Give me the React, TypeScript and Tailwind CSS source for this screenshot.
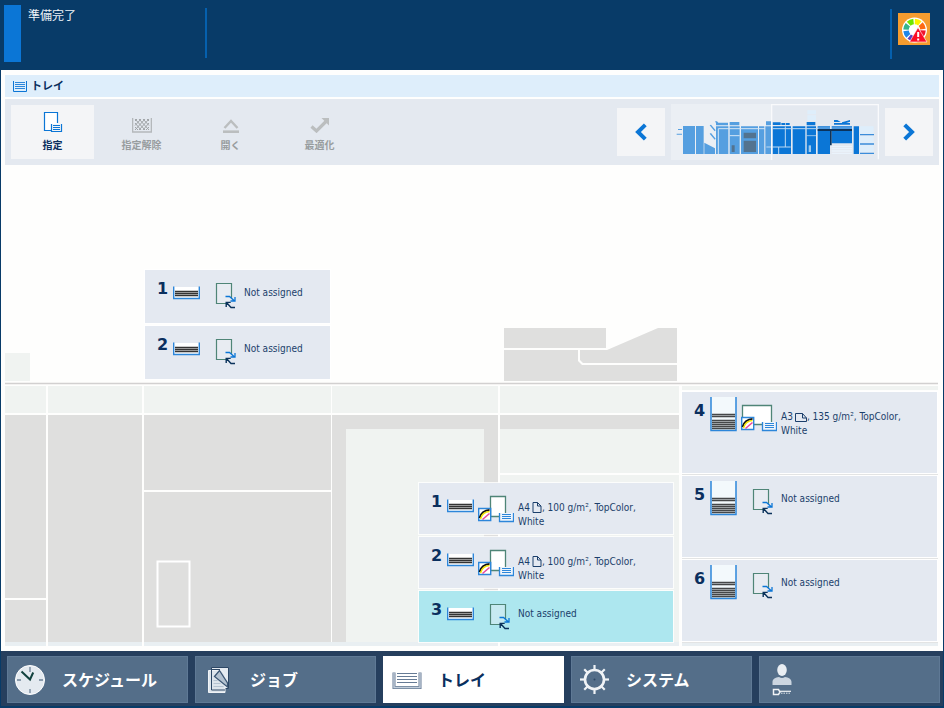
import type { ReactNode } from "react";

type Media = "portrait" | "landscape" | null;

type Tray = {
  id: number;
  media: Media;
  size?: string;
  details?: string;
  color?: string;
  selected?: boolean;
};

const inserterTrays: Tray[] = [
  { id: 1, media: null },
  { id: 2, media: null },
];

const engineTrays: Tray[] = [
  { id: 1, media: "portrait", size: "A4", details: "100 g/m², TopColor,", color: "White" },
  { id: 2, media: "portrait", size: "A4", details: "100 g/m², TopColor,", color: "White" },
  { id: 3, media: null, selected: true },
];

const moduleTrays: Tray[] = [
  { id: 4, media: "landscape", size: "A3", details: "135 g/m², TopColor,", color: "White" },
  { id: 5, media: null },
  { id: 6, media: null },
];

const wheelColors = [
  "#fff200",
  "#ff6a13",
  "#f0142d",
  "#e6007e",
  "#5b3fc0",
  "#1f86e8",
  "#35b58c",
  "#6fe600",
];

function ColorWarningIcon() {
  return (
    <svg viewBox="0 0 32 32" className="size-8" aria-hidden="true">
      <rect width="32" height="32" fill="#f59c2f" />
      <circle cx="16.5" cy="17" r="12.5" fill="#fff" />
      {wheelColors.map((color, i) => (
        <circle
          key={color}
          cx="16.5"
          cy="17"
          r="8.5"
          fill="none"
          stroke={color}
          strokeWidth="5.5"
          pathLength="8"
          strokeDasharray="0.82 7.18"
          transform={`rotate(${i * 45 - 88} 16.5 17)`}
        />
      ))}
      <path d="M20 14.5 29 29H11.5Z" fill="#fb0d27" stroke="#fff" strokeWidth="0.6" />
      <path d="M20.2 19v5M20.2 25.4v2" stroke="#fff" strokeWidth="2" />
    </svg>
  );
}

function TitleTrayIcon() {
  return (
    <svg viewBox="0 0 14 11" className="h-[11px] w-[14px]" fill="none" aria-hidden="true">
      <path d="M.5 0v10.5h13V0" stroke="#0b76d6" />
      <path d="M2 1.5h10M2 3.5h10M2 5.5h10M2 7.5h10" stroke="#2c86da" strokeWidth="1.2" />
    </svg>
  );
}

function AssignIcon() {
  return (
    <svg viewBox="0 0 20 22" className="h-[22px] w-5" fill="none" aria-hidden="true">
      <path d="M8 19.5H1.5v-18h13V12" fill="#fff" stroke="#0b76d6" strokeWidth="1.2" />
      <path d="M8.5 13v7.5h10V13" fill="#f4f5f7" stroke="#0b76d6" strokeWidth="1.2" />
      <path d="M10 14.5h7M10 16.5h7M10 18.5h7" stroke="#0b76d6" />
    </svg>
  );
}

function UnassignIcon() {
  return (
    <svg viewBox="0 0 20 15" className="h-[15px] w-5" fill="none" aria-hidden="true">
      <path d="M.5 0v14h19V0" stroke="#b4b8bb" strokeWidth="1.6" />
      <path
        d="m3 1 10 11M7 1l10 11M11 1l6 6.500M15 1l2 2M3 5l6 7M3 9l3 3M17 1 7 12M13 1 3 12M9 1 3 7.500M5 1 3 3M17 5l-6 7M17 9l-3 3"
        stroke="#9fa3a6"
      />
    </svg>
  );
}

function OpenIcon() {
  return (
    <svg viewBox="0 0 16 14" className="h-[14px] w-4" fill="none" aria-hidden="true">
      <path d="m1.5 9 6.5-7 6.5 7" stroke="#bbbebf" strokeWidth="2.4" />
      <path d="M0 12.7h16" stroke="#bbbebf" strokeWidth="2.6" />
    </svg>
  );
}

function OptimizeIcon() {
  return (
    <svg viewBox="0 0 20 15" className="h-[15px] w-5" fill="none" aria-hidden="true">
      <path d="m1.5 8.5 5 4.5L16 3.5" stroke="#bbbebf" strokeWidth="3.2" />
      <path d="M11.5 0H19v7.5Z" fill="#bbbebf" />
    </svg>
  );
}

function ChevronIcon({ direction }: { direction: "left" | "right" }) {
  return (
    <svg viewBox="0 0 12 18" className="h-[18px] w-3" fill="none" aria-hidden="true">
      <path
        d={direction === "left" ? "M10.3 1.8 3 9l7.3 7.2" : "M1.7 1.8 9 9l-7.3 7.2"}
        stroke="#0b76d6"
        strokeWidth="4"
      />
    </svg>
  );
}

function MachineOverview() {
  return (
    <svg viewBox="33 12 624 168" className="h-14 w-[208px]" aria-hidden="true">
      <rect x="33" y="12" width="301" height="168" fill="#ebeff4" />
      <g fill="#559fe0">
        <path d="M54 87h12v3H54zM50 101h16v3H50zM69 78h36v84H69zM108 78h23v84h-23zM133 128l32 17v17h-32z" />
        <path d="m149 76 4-2 14 17-3 3zM149 101l4-2 14 17-3 3zM165 64h6l4 4h29v8h-36v-7z" />
        <path d="M168 79h37v83h-37zM209 66h29v10h-29zM209 79h30v83h-30zM243 79h51v83h-51zM297 79h16v83h-16zM318 64h17v12h-17zM316 79h19v83h-19z" />
      </g>
      <path d="M175 162V86h140M209 107h30" fill="none" stroke="#d5e6f6" strokeWidth="3" />
      <path d="M251 98h37v17h-37zM251 122h37v34h-37zM215 136h9v20h-9z" fill="#53738f" />
      <g fill="#0b76d6">
        <path d="M338 79h55v83h-55zM398 79h38v83h-38zM440 79h28v83h-28zM473 79h37v83h-37zM515 79h61v51h-61zM581 79h16v83h-16z" />
        <path d="M338 67h24v8h-24zM364 69h11v6h-11zM377 69h12v6h-12zM440 66h26v10h-26zM522 60h10l10 6h-20zM522 69h32v5h-32zM546 67l24-7v5l-12 4h12v5h-24z" />
      </g>
      <path d="M319 141h73M356 141v21M376 79v62M338 86h137" fill="none" stroke="#bcd9f3" strokeWidth="3" />
      <path d="M440 107h28M473 84h103M597 82h44" fill="none" stroke="#d5e6f6" strokeWidth="2" />
      <path d="M473 87h103v6h-61v43h-5V93h-37z" fill="#0b335c" />
      <path d="M446 136h7v20h-7z" fill="#9cc9ef" />
      <path d="M442 31h26v12h-26zM442 46h26v16h-26zM600 79h41v22h-41zM600 108h41v20h-41zM600 136h41v20h-41z" fill="#deeefb" />
      <path d="M515 138h61v3h-61zM515 144h61v4h-61zM515 151h61v4h-61zM515 158h61v4h-61z" fill="#eaf3fc" />
      <path d="M600 104h42M600 132h42M600 160h42" stroke="#3a8ddb" strokeWidth="4" />
      <path d="M335 180V14h320v164" fill="none" stroke="#f9fafc" strokeWidth="4" />
    </svg>
  );
}

// Front view of the print engine and its modules, behind the tray cards.
function MachineDrawing() {
  return (
    <svg
      viewBox="5 165 934 481"
      className="absolute top-0 left-0 h-[481px] w-[934px]"
      aria-hidden="true"
    >
      <path d="M5 383.5h933" stroke="#d2d0d0" strokeWidth="1.4" />
      <g fill="#f0f3f1">
        <path d="M5 353h25v28H5z" />
        <path d="M5 386h41v27H5zM48 386h94v27H48zM144 386h187v27H144zM332 386h166v27H332zM500 386h179v27H500zM682 386h256v4H682z" />
        <path d="M500 429h179v44H500zM500 475h179v167H500z" />
      </g>
      <g fill="#dfdfde">
        <path d="M5 415h41v183H5zM5 600h41v42H5zM48 415h94v227H48z" />
        <path d="M144 415h187v75H144zM144 492h187v150H144zM332 415h166v227H332zM500 415h179v14H500z" />
        <path d="M504 328h102v20H504zM504 350h74v11l4 4h95v16H504z" />
        <path d="M580 350h27l51-22h19v35h-94l-3-3z" />
      </g>
      <path d="M346 429h138v213H346z" fill="#f0f3f1" />
      <path d="M157.5 561.5h32v65h-32z" fill="none" stroke="#fff" strokeWidth="2" />
      <path d="M682 474.5h256M682 558.5h256M682 642.5h256" stroke="#e3e4e4" />
      <path d="M5 642h41v4H5zM48 642h94v4H48zM144 642h354v4H144zM500 642h179v4H500zM682 643h256v3H682z" fill="#e9eff2" />
    </svg>
  );
}

function FillLevelIcon({ tall }: { tall?: boolean }) {
  if (tall) {
    return (
      <svg viewBox="0 0 27 44" className="h-11 w-[27px]" fill="none" aria-hidden="true">
        <path d="M1 5h25v34H1z" fill="#f3f9fc" />
        <path d="M1 5v33.5h25V5" stroke="#2c86da" strokeWidth="1.5" />
        <path
          d="M2 22.500h23M2 24.500h23M2 28.500h23M2 30.500h23M2 32.500h23M2 34.500h23M2 36.500h23"
          stroke="#454749"
          strokeWidth="1.3"
        />
      </svg>
    );
  }
  return (
    <svg viewBox="0 0 27 44" className="h-11 w-[27px]" fill="none" aria-hidden="true">
      <path d="M1 17h25v12H1z" fill="#fff" />
      <path d="M.7 16.5v12h25.6v-12" stroke="#2c86da" strokeWidth="1.4" />
      <path d="M2 21.5h23M2 23.5h23M2 25.5h23" stroke="#333" strokeWidth="1.4" />
    </svg>
  );
}

function NoMediaIcon() {
  return (
    <svg viewBox="0 0 36 44" className="h-11 w-9" fill="none" aria-hidden="true">
      <path d="M23 33.5H12.500v-20h15V28" fill="#edf1f5" fillOpacity="0.4" stroke="#4f8577" strokeWidth="1.2" />
      <path d="M21.500 26.500h4l4.500 4M31 27v4h-4.500" stroke="#0b76d6" strokeWidth="1.3" />
      <path d="M31 37.500h-4l-4.500-5M22.200 37v-4.600h4.500" stroke="#0b335c" strokeWidth="1.4" />
    </svg>
  );
}

function MediaIcon({ landscape }: { landscape?: boolean }) {
  return (
    <svg viewBox="0 0 36 44" className="h-11 w-9" fill="none" aria-hidden="true">
      <path
        d={landscape ? "M1.500 13.500h29v19h-29z" : "M12.500 13.500h15v20h-15z"}
        fill="#fff"
        stroke="#4f8577"
        strokeWidth="1.3"
      />
      <path d="M.7 25.500h12v12H.7z" fill="#fff" stroke="#2c86da" strokeWidth="1.4" />
      <path d="M1.500 35C2.500 30.500 6.500 27 11.500 27" stroke="#111" strokeWidth="1.8" />
      <path d="M2.500 36C3.500 32 7 28.800 11.500 28.500" stroke="#f5e400" strokeWidth="1.5" />
      <path d="M4.500 36.500 11.500 30.500" stroke="#e8459a" strokeWidth="1.5" />
      <path d="M21.500 30v8.500h14V30" fill="#eef4fb" stroke="#2c86da" strokeWidth="1.3" />
      <path d="M24 31.500h9M24 33.500h9M24 35.500h9" stroke="#2c86da" strokeWidth="1.1" />
    </svg>
  );
}

function FeedEdgeIcon({ landscape }: { landscape?: boolean }) {
  return landscape ? (
    <svg viewBox="0 0 12 9" className="ml-0.5 h-[9px] w-3" fill="none" aria-hidden="true">
      <path d="M.5.5v8h11V5L7.500.5zM7.500.5V5h4" stroke="#1b3f6b" />
    </svg>
  ) : (
    <svg viewBox="0 0 10 11" className="mb-0.5 ml-0.5 h-[11px] w-[10px]" fill="none" aria-hidden="true">
      <path d="M1 .5v10h8V4L5.500.5zM5.500.5V4H9" stroke="#1b3f6b" />
    </svg>
  );
}

function TrayCard({ tray, tall }: { tray: Tray; tall?: boolean }) {
  const landscape = tray.media === "landscape";
  return (
    <button
      type="button"
      aria-pressed={!!tray.selected}
      className={`flex w-full items-start pl-3 text-left font-['DejaVu_Sans_Condensed','DejaVu_Sans',sans-serif] text-[10px] leading-[14px] outline outline-white/80 ${
        tray.selected ? "bg-[#ade7ef]" : "bg-[#e4e9f1]"
      } ${tall ? "h-[81px]" : "h-full"}`}
    >
      <span className="w-4 pt-[11px] font-['DejaVu_Sans',sans-serif] text-base leading-4 font-bold text-[#0a2f5e]">
        {tray.id}
      </span>
      <FillLevelIcon tall={tall} />
      <span className="mx-1 shrink-0">
        {tray.media ? <MediaIcon landscape={landscape} /> : <NoMediaIcon />}
      </span>
      {tray.media ? (
        <span className="flex flex-col pt-[18px]">
          <span className="flex items-center whitespace-nowrap">
            <span>{tray.size}</span>
            <FeedEdgeIcon landscape={landscape} />
            <span>, {tray.details}</span>
          </span>
          <span>{tray.color}</span>
        </span>
      ) : (
        <span className="pt-4">Not assigned</span>
      )}
    </button>
  );
}

function ToolButton({
  label,
  icon,
  active,
}: {
  label: string;
  icon: ReactNode;
  active?: boolean;
}) {
  return (
    <button
      type="button"
      disabled={!active}
      className={`flex h-[54px] w-[83px] flex-col items-center text-[10px] leading-4 font-bold ${
        active ? "bg-[#f4f5f7] text-[#0a2f5e]" : "text-[#989d9f]"
      }`}
    >
      <span className="flex h-8 items-end pb-1">{icon}</span>
      {label}
    </button>
  );
}

function ClockIcon() {
  return (
    <svg viewBox="0 0 32 32" className="size-8" fill="none" aria-hidden="true">
      <circle cx="15" cy="16" r="14.5" fill="#e4eaf0" stroke="#fff" />
      <path d="M15 3v5M15 25v4M2 16h4M24 16h4" stroke="#6d8297" strokeWidth="1.3" />
      <path d="M6.5 7.5 15 15.5l3.2-7" stroke="#12423f" strokeWidth="2" />
    </svg>
  );
}

function JobIcon() {
  return (
    <svg viewBox="0 0 32 32" className="size-8" fill="none" aria-hidden="true">
      <path d="M8.5 3.5h17v21h-17z" fill="#e4eaf0" stroke="#2d4765" />
      <path d="M5.5 6.500h13l3.500 4v18H5.500z" fill="#dde4eb" stroke="#f0f3f6" />
      <path d="M8.5 5.500h8.500M8.500 5.500V26H22" stroke="#2d4765" />
      <path d="M10.500 16.500h4M10.500 19.500h7M10.500 22.500h10" stroke="#b4c2d0" />
      <path d="m11.500 12.500 5-6L24.500 19v4z" fill="#b4c2d0" stroke="#3c5674" strokeWidth="1.3" />
    </svg>
  );
}

function NavTrayIcon() {
  return (
    <svg viewBox="0 0 32 32" className="size-8" fill="none" aria-hidden="true">
      <path d="M3 8.500v15h26v-15" stroke="#667b95" strokeWidth="3" />
      <path d="M3 8.500v15h26v-15" stroke="#c3cedb" strokeWidth="1.4" />
      <path d="M6 9.500h20M6 12.500h20M6 15.500h20M6 18.500h20" stroke="#667b95" strokeWidth="1.2" />
    </svg>
  );
}

function GearIcon() {
  return (
    <svg viewBox="0 0 32 32" className="size-8" fill="none" aria-hidden="true">
      {[0, 45, 90, 135, 180, 225, 270, 315].map((angle) => (
        <path
          key={angle}
          d="M15.5 7V1"
          stroke="#f0f3f6"
          strokeWidth="2.2"
          transform={`rotate(${angle} 15.5 15.5)`}
        />
      ))}
      <circle cx="15.5" cy="15.5" r="9.500" stroke="#f0f3f6" strokeWidth="2.600" />
      <circle cx="15.5" cy="15.5" r="1" fill="#2d4765" />
    </svg>
  );
}

function UserIcon() {
  return (
    <svg viewBox="0 0 32 34" className="h-[34px] w-8" fill="none" aria-hidden="true">
      <ellipse cx="15" cy="7" rx="4.8" ry="6" fill="#e9eef3" />
      <path d="M5.500 22v-3c0-3 3-4.500 6.500-5 2 1.200 4 1.200 6 0 3.500.5 6.500 2 6.500 5v3z" fill="#cbd5e0" />
      <path d="M6.500 26.500h5l1.500 2.500-1.500 2.500h-5z" stroke="#f0f3f6" strokeWidth="1.5" />
      <path d="M13 28.300h11" stroke="#f0f3f6" strokeWidth="1.200" />
      <path d="M14 30.200h10" stroke="#dfe6ed" strokeDasharray="1.500 1" />
    </svg>
  );
}

const navItems = [
  { label: "スケジュール", icon: <ClockIcon /> },
  { label: "ジョブ", icon: <JobIcon /> },
  { label: "トレイ", icon: <NavTrayIcon />, current: true },
  { label: "システム", icon: <GearIcon /> },
  { label: "", icon: <UserIcon /> },
];

export default function App() {
  return (
    <div className="flex min-h-screen flex-col bg-[#083b68] font-['Noto_Sans','Noto_Sans_CJK_JP',sans-serif] text-[#1b3f6b]">
      <header className="flex h-[70px] items-start pt-[5px] pr-[14px] pl-1">
        <div className="h-[57px] w-[17px] bg-[#0b76d6]" />
        <div className="mt-[3px] ml-[7px] flex h-[50px] w-[179px] border-r-2 border-[#0560ae]">
          <h1 className="text-xs leading-4 text-[#eef3f8]">準備完了</h1>
        </div>
        <div className="mt-1 ml-auto h-[50px] w-0.5 bg-[#0560ae]" />
        <button type="button" aria-label="カラー警告" className="mt-2 ml-[6px]">
          <ColorWarningIcon />
        </button>
      </header>

      <main className="mx-px flex flex-1 flex-col bg-[#fefefd] px-1 pt-[5px]">
        <div className="flex h-[22px] items-center bg-[#deeefb] pl-2">
          <TitleTrayIcon />
          <h2 className="ml-1 text-[11px] leading-4 font-bold text-[#0a2f5e]">トレイ</h2>
        </div>

        <div className="mt-0.5 flex h-[66px] items-center justify-between bg-[#e4e9f0] px-[6px]">
          <div className="flex gap-[6px]">
            <ToolButton label="指定" icon={<AssignIcon />} active />
            <ToolButton label="指定解除" icon={<UnassignIcon />} />
            <ToolButton label="開く" icon={<OpenIcon />} />
            <ToolButton label="最適化" icon={<OptimizeIcon />} />
          </div>
          <div className="flex items-center gap-[6px]">
            <button
              type="button"
              aria-label="前へ"
              className="flex size-12 items-center justify-center bg-[#f4f5f7]"
            >
              <ChevronIcon direction="left" />
            </button>
            <MachineOverview />
            <button
              type="button"
              aria-label="次へ"
              className="flex size-12 items-center justify-center bg-[#f4f5f7]"
            >
              <ChevronIcon direction="right" />
            </button>
          </div>
        </div>

        <section aria-label="トレイ" className="relative min-h-[486px] flex-1">
          <MachineDrawing />
          <div className="absolute top-[105px] left-[140px] grid w-[185px] auto-rows-[53px] gap-[3px]">
            {inserterTrays.map((tray) => (
              <TrayCard key={tray.id} tray={tray} />
            ))}
          </div>
          <div className="absolute top-[318px] left-[414px] grid w-[254px] auto-rows-[51px] gap-[3px]">
            {engineTrays.map((tray) => (
              <TrayCard key={tray.id} tray={tray} />
            ))}
          </div>
          <div className="absolute top-[227px] left-[677px] grid w-[255px] gap-[3px]">
            {moduleTrays.map((tray) => (
              <TrayCard key={tray.id} tray={tray} tall />
            ))}
          </div>
        </section>
      </main>

      <nav className="mx-px mb-0.5 grid h-[55px] grid-cols-5 gap-[7px] bg-[#263f5e] pt-[5px] pr-[3px] pb-[3px] pl-[6px]">
        {navItems.map((item, i) => (
          <button
            key={i}
            type="button"
            aria-label={item.label || "ユーザー"}
            aria-current={item.current ? "page" : undefined}
            className={`flex items-center border pl-[7px] text-base leading-6 font-bold ${
              item.current
                ? "border-white bg-white text-[#0a2f5e]"
                : "border-[#5f7995] bg-[#546e89] text-white"
            }`}
          >
            {item.icon}
            <span className="ml-[15px]">{item.label}</span>
          </button>
        ))}
      </nav>
    </div>
  );
}
